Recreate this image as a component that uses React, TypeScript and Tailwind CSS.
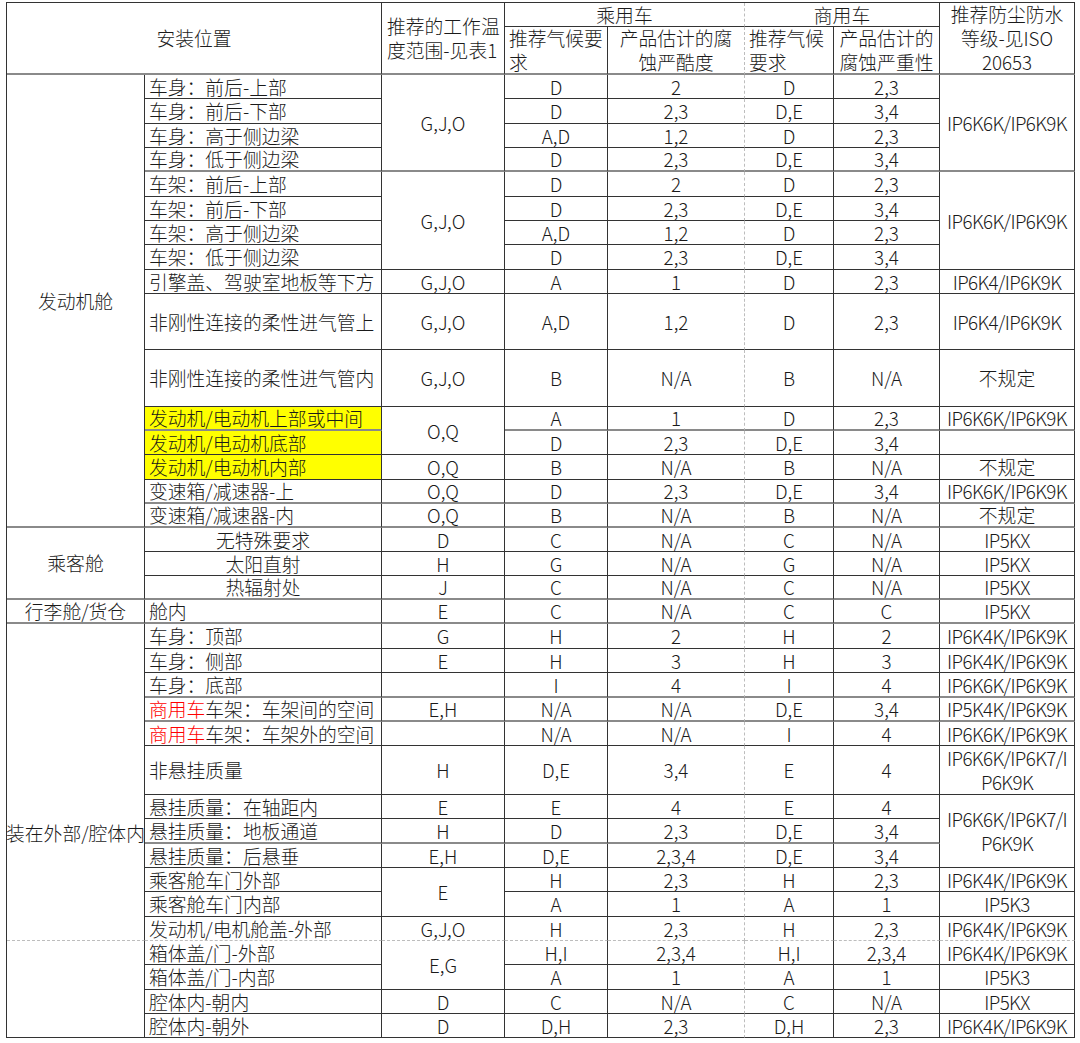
import React from 'react';

type Col = 'a' | 'b' | 'c' | 'd' | 'e' | 'f' | 'g' | 'h';
type CellObj = { t: React.ReactNode; rs?: number; cs?: number; al?: 'l' | 'c'; cls?: string };
type Cell = string | CellObj;
type Row = { g?: boolean; dash?: boolean; cells: Partial<Record<Col, Cell>> };

const COLS: Col[] = ['a', 'b', 'c', 'd', 'e', 'f', 'g', 'h'];

const ROW_SPAN: Record<number, string> = {
  1: '',
  2: 'row-span-2',
  3: 'row-span-3',
  4: 'row-span-4',
  12: 'row-span-12',
  16: 'row-span-16',
};
const COL_SPAN: Record<number, string> = { 1: '', 2: 'col-span-2' };

const lines = (...l: string[]) =>
  l.map((s, i) => (
    <span key={i} className="block">
      {s}
    </span>
  ));

const red = (rest: string) => (
  <>
    <span className="text-[#ff0000]">商用车</span>
    {rest}
  </>
);

const yellow = 'bg-[#ffff00]';
const tight = 'tracking-[-0.6px]';
const wrapIP = lines('IP6K6K/IP6K7/I', 'P6K9K');

// header (2 rows) + 36 data rows, in table order
const ROWS: Row[] = [
  {
    cells: {
      a: { t: '安装位置', rs: 2, cs: 2 },
      c: { t: lines('推荐的工作温', '度范围-见表1'), rs: 2, al: 'l', cls: 'pl-[5px]' },
      d: { t: '乘用车', cs: 2 },
      f: { t: '商用车', cs: 2 },
      h: { t: lines('推荐防尘防水', '等级-见ISO', '20653'), rs: 2 },
    },
  },
  {
    g: true,
    cells: {
      d: { t: lines('推荐气候要', '求'), al: 'l' },
      e: { t: lines('产品估计的腐', '蚀严酷度') },
      f: { t: lines('推荐气候', '要求'), al: 'l', cls: 'pl-[3px]' },
      g: { t: lines('产品估计的', '腐蚀严重性') },
    },
  },
  // 发动机舱
  { cells: { a: { t: '发动机舱', rs: 16 }, b: '车身：前后-上部', c: { t: 'G,J,O', rs: 4 }, d: 'D', e: '2', f: 'D', g: '2,3', h: { t: 'IP6K6K/IP6K9K', rs: 4 } } },
  { cells: { b: '车身：前后-下部', d: 'D', e: '2,3', f: 'D,E', g: '3,4' } },
  { cells: { b: '车身：高于侧边梁', d: 'A,D', e: '1,2', f: 'D', g: '2,3' } },
  { g: true, cells: { b: '车身：低于侧边梁', d: 'D', e: '2,3', f: 'D,E', g: '3,4' } },
  { cells: { b: '车架：前后-上部', c: { t: 'G,J,O', rs: 4 }, d: 'D', e: '2', f: 'D', g: '2,3', h: { t: 'IP6K6K/IP6K9K', rs: 4 } } },
  { cells: { b: '车架：前后-下部', d: 'D', e: '2,3', f: 'D,E', g: '3,4' } },
  { cells: { b: '车架：高于侧边梁', d: 'A,D', e: '1,2', f: 'D', g: '2,3' } },
  { cells: { b: '车架：低于侧边梁', d: 'D', e: '2,3', f: 'D,E', g: '3,4' } },
  { cells: { b: '引擎盖、驾驶室地板等下方', c: 'G,J,O', d: 'A', e: '1', f: 'D', g: '2,3', h: 'IP6K4/IP6K9K' } },
  { cells: { b: '非刚性连接的柔性进气管上', c: 'G,J,O', d: 'A,D', e: '1,2', f: 'D', g: '2,3', h: 'IP6K4/IP6K9K' } },
  { cells: { b: '非刚性连接的柔性进气管内', c: 'G,J,O', d: 'B', e: 'N/A', f: 'B', g: 'N/A', h: '不规定' } },
  { g: true, cells: { b: { t: '发动机/电动机上部或中间', cls: yellow }, c: { t: 'O,Q', rs: 2 }, d: 'A', e: '1', f: 'D', g: '2,3', h: 'IP6K6K/IP6K9K' } },
  { cells: { b: { t: '发动机/电动机底部', cls: yellow }, d: 'D', e: '2,3', f: 'D,E', g: '3,4', h: '' } },
  { cells: { b: { t: '发动机/电动机内部', cls: yellow }, c: 'O,Q', d: 'B', e: 'N/A', f: 'B', g: 'N/A', h: '不规定' } },
  { g: true, cells: { b: '变速箱/减速器-上', c: 'O,Q', d: 'D', e: '2,3', f: 'D,E', g: '3,4', h: 'IP6K6K/IP6K9K' } },
  { g: true, cells: { b: '变速箱/减速器-内', c: 'O,Q', d: 'B', e: 'N/A', f: 'B', g: 'N/A', h: '不规定' } },
  // 乘客舱
  { cells: { a: { t: '乘客舱', rs: 3 }, b: { t: '无特殊要求', al: 'c' }, c: 'D', d: 'C', e: 'N/A', f: 'C', g: 'N/A', h: 'IP5KX' } },
  { cells: { b: { t: '太阳直射', al: 'c' }, c: 'H', d: 'G', e: 'N/A', f: 'G', g: 'N/A', h: 'IP5KX' } },
  { g: true, cells: { b: { t: '热辐射处', al: 'c' }, c: 'J', d: 'C', e: 'N/A', f: 'C', g: 'N/A', h: 'IP5KX' } },
  { g: true, cells: { a: '行李舱/货仓', b: '舱内', c: 'E', d: 'C', e: 'N/A', f: 'C', g: 'C', h: 'IP5KX' } },
  // 装在外部/腔体内
  {
    cells: {
      a: { t: '装在外部/腔体内', rs: 12, cls: 'items-start pt-[197px] whitespace-nowrap' },
      b: '车身：顶部', c: 'G', d: 'H', e: '2', f: 'H', g: '2', h: 'IP6K4K/IP6K9K',
    },
  },
  { cells: { b: '车身：侧部', c: 'E', d: 'H', e: '3', f: 'H', g: '3', h: 'IP6K4K/IP6K9K' } },
  { g: true, cells: { b: '车身：底部', c: '', d: 'I', e: '4', f: 'I', g: '4', h: 'IP6K6K/IP6K9K' } },
  { g: true, cells: { b: { t: red('车架：车架间的空间') }, c: 'E,H', d: 'N/A', e: 'N/A', f: 'D,E', g: '3,4', h: 'IP5K4K/IP6K9K' } },
  { cells: { b: { t: red('车架：车架外的空间') }, c: '', d: 'N/A', e: 'N/A', f: 'I', g: '4', h: 'IP6K6K/IP6K9K' } },
  { cells: { b: '非悬挂质量', c: 'H', d: 'D,E', e: '3,4', f: 'E', g: '4', h: { t: wrapIP, cls: tight } } },
  { cells: { b: '悬挂质量：在轴距内', c: 'E', d: 'E', e: '4', f: 'E', g: '4', h: { t: wrapIP, rs: 3, cls: tight } } },
  { g: true, cells: { b: '悬挂质量：地板通道', c: 'H', d: 'D', e: '2,3', f: 'D,E', g: '3,4' } },
  { cells: { b: '悬挂质量：后悬垂', c: 'E,H', d: 'D,E', e: '2,3,4', f: 'D,E', g: '3,4' } },
  { cells: { b: '乘客舱车门外部', c: { t: 'E', rs: 2 }, d: 'H', e: '2,3', f: 'H', g: '2,3', h: 'IP6K4K/IP6K9K' } },
  { cells: { b: '乘客舱车门内部', d: 'A', e: '1', f: 'A', g: '1', h: 'IP5K3' } },
  { dash: true, cells: { b: '发动机/电机舱盖-外部', c: 'G,J,O', d: 'H', e: '2,3', f: 'H', g: '2,3', h: 'IP6K4K/IP6K9K' } },
  { cells: { a: { t: '', rs: 4 }, b: '箱体盖/门-外部', c: { t: 'E,G', rs: 2 }, d: 'H,I', e: '2,3,4', f: 'H,I', g: '2,3,4', h: 'IP6K4K/IP6K9K' } },
  { cells: { b: '箱体盖/门-内部', d: 'A', e: '1', f: 'A', g: '1', h: 'IP5K3' } },
  { cells: { b: '腔体内-朝内', c: 'D', d: 'C', e: 'N/A', f: 'C', g: 'N/A', h: 'IP5KX' } },
  { cells: { b: '腔体内-朝外', c: 'D', d: 'D,H', e: '2,3', f: 'D,H', g: '2,3', h: 'IP6K4K/IP6K9K' } },
];

function TableCell({ cell, col, rowIdx }: { cell: Cell; col: Col; rowIdx: number }) {
  const o: CellObj = typeof cell === 'string' ? { t: cell } : cell;
  const rs = o.rs ?? 1;
  const cs = o.cs ?? 1;
  const endRow = ROWS[rowIdx + rs - 1];

  const bottom = endRow.dash
    ? 'border-b border-b-[#bdbdbd] [border-bottom-style:dashed]'
    : endRow.g
      ? 'border-b-2 border-b-[#8a8a8a]'
      : 'border-b border-b-[#333333]';
  const dashedRight = col === 'e' || (col === 'd' && cs === 2);
  const right = dashedRight
    ? 'border-r border-r-[#bdbdbd] [border-right-style:dashed]'
    : 'border-r border-r-[#333333]';
  const left = (o.al ?? (col === 'b' ? 'l' : 'c')) === 'l';
  const align = left ? 'justify-start text-left pl-[4px]' : 'justify-center text-center';
  // the IP codes run narrower in the original spreadsheet font
  const ipCode = col === 'h' && typeof o.t === 'string' && o.t.startsWith('IP') ? tight : '';

  return (
    <div
      className={`flex items-center ${align} ${bottom} ${right} ${ROW_SPAN[rs]} ${COL_SPAN[cs]} ${ipCode} ${o.cls ?? ''}`}
    >
      <div>{o.t}</div>
    </div>
  );
}

export default function App() {
  return (
    <div className="w-[1080px] h-[1043px] bg-white pl-[6px] pt-[2px] overflow-hidden font-['Noto_Sans_CJK_SC','Noto_Sans',sans-serif] font-light text-[18.8px] leading-[24px] text-[#1a1a1a]">
      <div className="grid w-max border-l border-t border-[#333333] grid-cols-[138px_237px_123px_103px_137px_89px_106px_135px] grid-rows-[24px_48px_24px_25px_24px_24px_25px_24px_24px_25px_24px_56px_57px_24px_24px_25px_24px_24px_24px_24px_24px_24px_25px_24px_25px_24px_24px_49px_24px_25px_24px_24px_25px_24px_24px_25px_24px_24px]">
        {ROWS.map((row, ri) =>
          COLS.filter((c) => row.cells[c] !== undefined).map((c) => (
            <TableCell key={`${ri}-${c}`} cell={row.cells[c] as Cell} col={c} rowIdx={ri} />
          )),
        )}
      </div>
    </div>
  );
}
